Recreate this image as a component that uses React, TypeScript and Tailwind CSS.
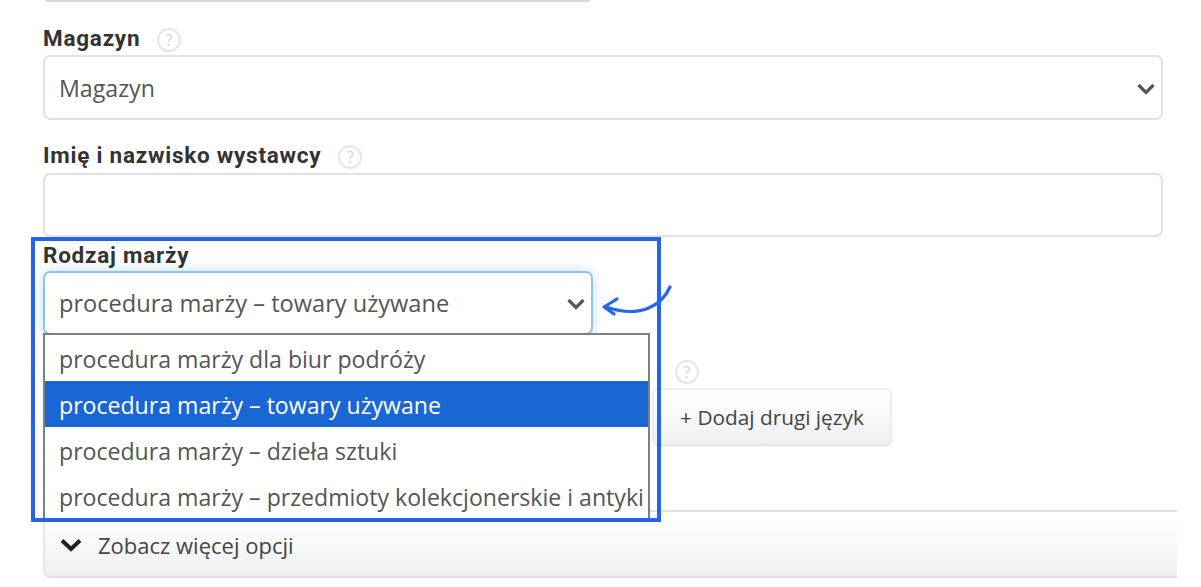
const options = [
  "procedura marży dla biur podróży",
  "procedura marży – towary używane",
  "procedura marży – dzieła sztuki",
  "procedura marży – przedmioty kolekcjonerskie i antyki",
];

function Help({ className = "" }: { className?: string }) {
  return (
    <span
      className={`flex h-[24px] w-[24px] items-center justify-center rounded-full border-2 border-[#e6e6e6] text-[16px] leading-none text-[#d4d4d4] ${className}`}
    >
      ?
    </span>
  );
}

function Label({ text, help }: { text: string; help?: boolean }) {
  return (
    <div className="flex h-[24px] items-center">
      <span className="font-['Roboto',sans-serif] text-[22.5px] font-bold tracking-[0.75px] text-[#333]">{text}</span>
      {help && <Help className="mt-[2px] ml-[17px]" />}
    </div>
  );
}

function Chevron() {
  return (
    <svg viewBox="0 0 18 12" className="h-[12px] w-[18px]" fill="none">
      <path d="M1.5 2 9 9.5 16.5 2" stroke="#555" strokeWidth="3.2" />
    </svg>
  );
}

export default function App() {
  return (
    <div className="relative h-[587px] w-[1201px] overflow-hidden bg-white pl-[43px] font-['Open_Sans',sans-serif]">
      <div className="ml-[2px] h-[2px] w-[545px] rounded-b bg-[#d8d8d8]" />

      <div className="mt-[25px]">
        <Label text="Magazyn" help />
        <div className="mt-[4px] flex h-[65px] w-[1120px] items-center justify-between rounded-[7px] border-2 border-[#e2e2e2] pt-[2px] pr-[6px] pl-[14px]">
          <span className="text-[23.2px] text-[#555]">Magazyn</span>
          <Chevron />
        </div>
      </div>

      <div className="mt-[24px]">
        <Label text="Imię i nazwisko wystawcy" help />
        <div className="mt-[5px] h-[64px] w-[1120px] rounded-[7px] border-2 border-[#e2e2e2]" />
      </div>

      <div className="mt-[7px]">
        <Label text="Rodzaj marży" />
        <div className="mt-[3px] flex h-[64px] w-[550px] items-center justify-between rounded-[7px] border-2 border-[#8cc4f0] pt-[2px] pr-[6px] pl-[14px] shadow-[0_0_12px_rgba(120,185,240,0.45)]">
          <span className="text-[23.6px] text-[#555]">procedura marży – towary używane</span>
          <Chevron />
        </div>
      </div>

      <Help className="mt-[25px] ml-[632px]" />
      <button className="mt-[4px] ml-[609px] flex h-[57px] w-[240px] items-center justify-center rounded-[6px] border-2 border-[#ededed] bg-gradient-to-b from-white to-[#eff0f2] pt-[2px] text-[20.8px] text-[#444] shadow-[0_1px_1px_rgba(0,0,0,0.15)]">
        + Dodaj drugi język
      </button>

      <div className="mt-[65px] flex h-[68px] w-[1134px] items-center rounded-bl-[7px] border-y-2 border-l-2 border-y-[#e2e2e2] border-l-[#e8e8e8] bg-gradient-to-b from-white to-[#eff0f2] pt-[2px] pl-[15px] text-[22px] text-[#444]">
        <svg viewBox="0 0 22 14" className="h-[14px] w-[22px]" fill="none">
          <path d="M2 2.5 11 11 20 2.5" stroke="#222" strokeWidth="4" />
        </svg>
        <span className="ml-[16px]">Zobacz więcej opcji</span>
      </div>

      {/* rozwinieta lista */}
      <div className="absolute top-[333px] left-[43px] h-[187px] w-[607px] border-x-2 border-t-2 border-[#7f7f7f] bg-white text-[23.1px] text-[#555]">
        {options.map((o, i) => (
          <div
            key={o}
            className={`flex h-[46px] items-center pt-[3px] pl-[14px] whitespace-nowrap ${i === 1 ? "bg-[#1a66d4] text-white" : ""}`}
          >
            {o}
          </div>
        ))}
      </div>

      {/* ramka i strzalka */}
      <div className="absolute top-[237px] left-[31px] h-[285px] w-[630px] border-[4px] border-[#2563eb]" />
      <svg viewBox="0 0 72 34" className="absolute top-[284px] left-[601px] h-[34px] w-[72px]" fill="none">
        <path d="M69 3C61 21 40 35 5 23" stroke="#2468ec" strokeWidth="3.2" strokeLinecap="round" />
        <path d="M16 15 3 23 13 30" stroke="#2468ec" strokeWidth="3.2" strokeLinecap="round" strokeLinejoin="round" />
      </svg>
    </div>
  );
}
